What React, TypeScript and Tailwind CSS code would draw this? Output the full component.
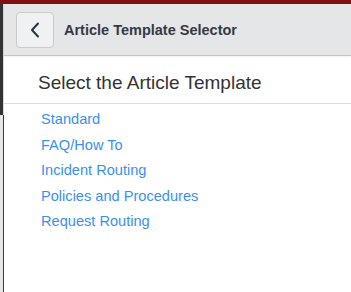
const templates = [
  "Standard",
  "FAQ/How To",
  "Incident Routing",
  "Policies and Procedures",
  "Request Routing",
];

export default function App() {
  return (
    <div className="flex h-[292px] w-[351px] flex-col overflow-hidden bg-white font-['Liberation_Sans',Arial,sans-serif]">
      <div className="h-[4px] shrink-0 bg-[#7f1111]" />
      <div className="flex min-h-0 flex-1">
        <div className="flex w-[4px] shrink-0 flex-col">
          <div className="h-[111px] border-r border-[#d8d8d8] bg-[#333333]" />
          <div className="flex-1 border-r border-[#3a3a3a] bg-[#e6e6e6]" />
        </div>
        <div className="flex min-w-0 flex-1 flex-col">
          <header className="flex h-[52px] shrink-0 items-center gap-[10px] border-b border-[#c4c4c4] bg-[#e5e6e8] pl-[12px] shadow-[0_1px_2px_rgba(0,0,0,0.06)]">
            <button className="flex h-[36px] w-[38px] items-center justify-center rounded-[4px] border border-[#c9cacc] bg-[#f0f1f3]">
              <svg width="10" height="16" viewBox="0 0 10 16" fill="none">
                <path d="M8 1.5 L2 8 L8 14.5" stroke="#263447" strokeWidth="2" strokeLinecap="round" strokeLinejoin="round" />
              </svg>
            </button>
            <h1 className="pt-[2px] text-[14.5px] font-bold text-[#333a42]">Article Template Selector</h1>
          </header>
          <div className="flex h-[48px] shrink-0 items-center border-b border-[#dcdcdc] pl-[34px] pt-[7px]">
            <h2 className="text-[19px] text-[#333333]">Select the Article Template</h2>
          </div>
          <ul className="flex flex-col gap-[8px] pl-[37px] pt-[7px]">
            {templates.map((t) => (
              <li key={t} className="text-[14.6px] leading-[17.5px] text-[#3b8ff2]">
                {t}
              </li>
            ))}
          </ul>
        </div>
      </div>
    </div>
  );
}
